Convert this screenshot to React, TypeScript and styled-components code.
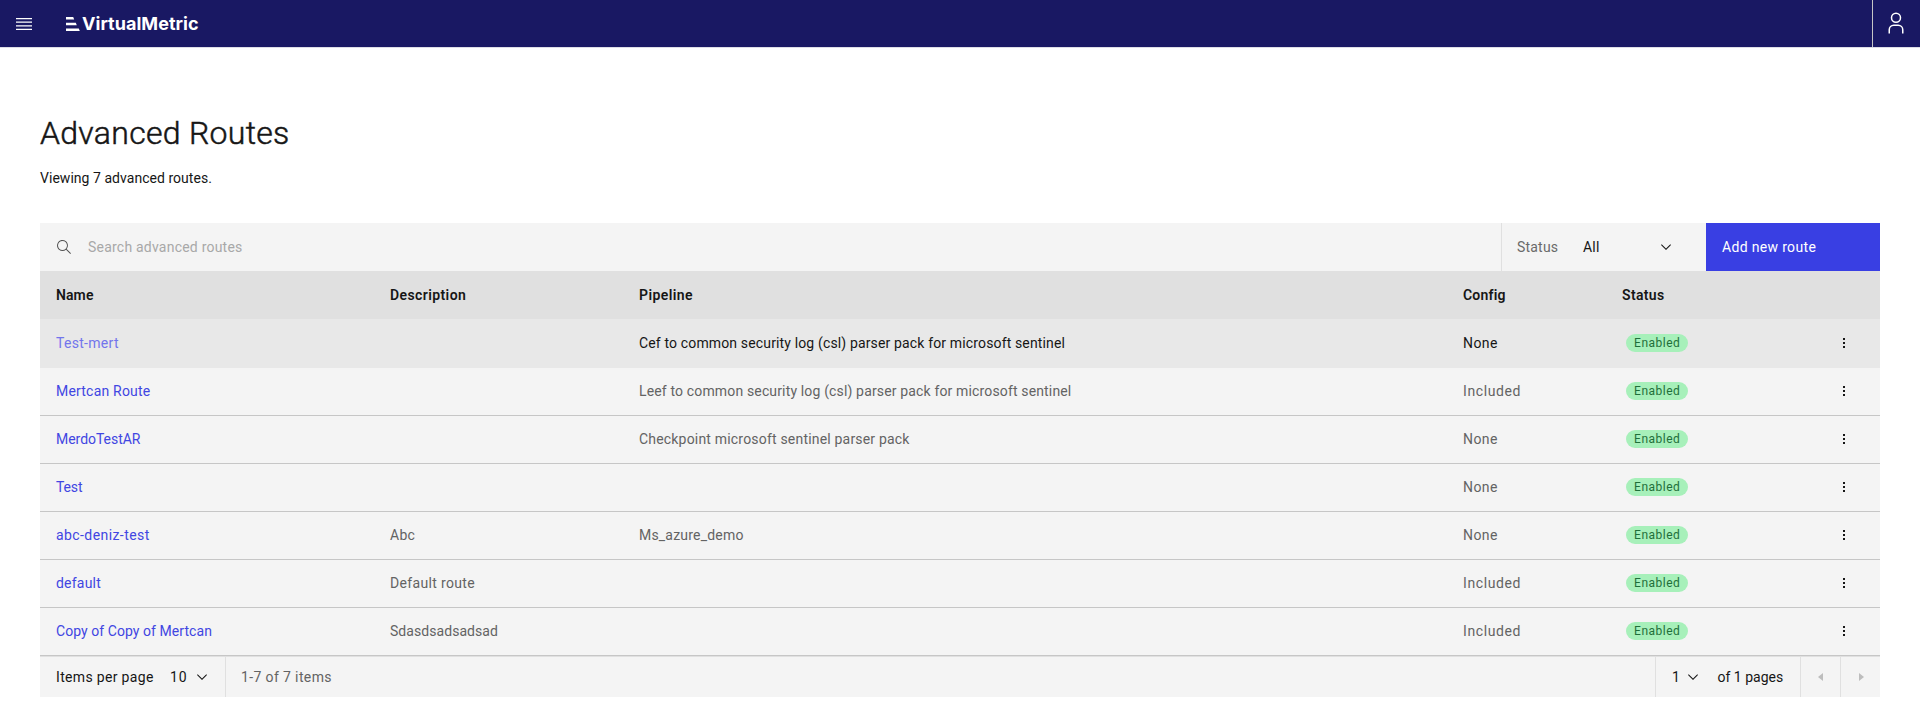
import React from 'react';
import styled, { createGlobalStyle } from 'styled-components';

const GlobalStyle = createGlobalStyle`
  *, *::before, *::after { box-sizing: border-box; }
  body {
    margin: 0;
    background: #fff;
    color: #161616;
    font-family: Roboto, "Open Sans", sans-serif;
    font-size: 14px;
    line-height: 18px;
    font-kerning: normal;
  }
  button { font: inherit; color: inherit; border: 0; padding: 0; background: none; cursor: pointer; }
`;

const Text = styled.span<{ $track?: number }>`
  letter-spacing: ${p => p.$track ?? 0}px;
  white-space: pre;
`;

/* ---------- header ---------- */

const Header = styled.header`
  display: flex;
  align-items: center;
  height: 48px;
  background: #191863;
  border-bottom: 1px solid #dcdce6;
`;

const MenuButton = styled.button`
  display: flex;
  align-items: center;
  justify-content: center;
  width: 48px;
  height: 47px;
  padding-top: 1px;
`;

const Brand = styled.a`
  display: flex;
  align-items: center;
  gap: 2px;
  margin-left: 18px;
  color: #fff;
`;

const BrandName = styled.span`
  font: 700 18px/24px Inter, sans-serif;
  letter-spacing: 0.03px;
`;

const UserButton = styled.button`
  display: flex;
  align-items: center;
  justify-content: center;
  width: 48px;
  height: 47px;
  margin-left: auto;
  padding: 0 1px 1px 0;
  border-left: 1px solid #c6c6c6;
`;

/* ---------- page ---------- */

const Page = styled.main`
  padding: 65px 40px 0;
`;

const Title = styled.h1`
  margin: 0;
  font-weight: 300;
  font-size: 32px;
  line-height: 40px;
  letter-spacing: 0.29px;
  -webkit-text-stroke: 0.5px #161616;
`;

const Summary = styled.p`
  margin: 16px 0 36px;
  letter-spacing: 0.037px;
`;

/* ---------- toolbar ---------- */

const Toolbar = styled.div`
  display: flex;
  height: 48px;
  background: #f4f4f4;
`;

const Search = styled.label`
  flex: 1;
  display: flex;
  align-items: center;
  gap: 16px;
  padding-left: 16px;
  color: #a8a8a8;
`;

const Filter = styled.div`
  display: flex;
  align-items: center;
  width: 205px;
  padding-left: 15px;
  border-left: 1px solid #e0e0e0;
`;

const FilterLabel = styled(Text)`
  width: 66px;
  color: #6a6a6a;
`;

const FilterValue = styled(Text)`
  width: 75px;
`;

const AddButton = styled.button`
  width: 174px;
  padding-left: 16px;
  background: #393fe3;
  color: #fff;
  text-align: left;
`;

/* ---------- table ---------- */

const rowGrid = '334px 249px 824px 159px 214px 60px';

const HeadRow = styled.div`
  display: grid;
  grid-template-columns: ${rowGrid};
  align-items: center;
  height: 48px;
  background: #e0e0e0;
  font-weight: 600;
`;

const Row = styled.div<{ $active?: boolean }>`
  display: grid;
  grid-template-columns: ${rowGrid};
  align-items: center;
  height: ${p => (p.$active ? 49 : 48)}px;
  padding-bottom: 1px;
  background: ${p => (p.$active ? '#e8e8e8' : '#f4f4f4')};
  border-bottom: ${p => (p.$active ? '0' : '1px solid #c6c6c6')};
  color: ${p => (p.$active ? '#161616' : '#636363')};
`;

const Cell = styled.div`
  display: flex;
  align-items: center;
  padding-left: 16px;
`;

const RouteLink = styled(Text)<{ $active?: boolean }>`
  color: ${p => (p.$active ? '#7275ec' : '#4146e2')};
`;

const Tag = styled.span`
  display: flex;
  align-items: center;
  justify-content: center;
  width: 62px;
  height: 18px;
  margin-left: 4px;
  border-radius: 9px;
  background: #a7f0ba;
  color: #1f6f3a;
  font-size: 12px;
  line-height: 16px;
  letter-spacing: 0.5px;
  text-indent: 0.5px;
`;

const ActionButton = styled.button`
  display: flex;
  width: 16px;
  height: 16px;
  margin-left: 16px;
  color: #161616;
`;

/* ---------- pagination ---------- */

const Pagination = styled.div`
  display: flex;
  height: 41px;
  background: #f4f4f4;
  border-top: 1px solid #e0e0e0;
`;

const PageSize = styled.div`
  display: flex;
  align-items: center;
  width: 186px;
  padding-left: 16px;
  border-right: 1px solid #e0e0e0;
`;

const PageSizeLabel = styled(Text)`
  width: 114px;
`;

const PageSizeValue = styled(Text)`
  width: 24px;
`;

const Range = styled.div`
  flex: 1;
  display: flex;
  align-items: center;
  padding-left: 15px;
  color: #636363;
`;

const PageSelect = styled.div`
  display: flex;
  align-items: center;
  width: 145px;
  padding-left: 16px;
  border-left: 1px solid #e0e0e0;
`;

const PageNumber = styled(Text)`
  width: 13px;
`;

const PageTotal = styled(Text)`
  margin-left: 16.5px;
`;

const PageButton = styled.button`
  display: flex;
  align-items: center;
  width: 40px;
  padding-left: 12px;
  border-left: 1px solid #e0e0e0;
  color: #bdbdbd;
`;

/* ---------- icons ---------- */

const MenuIcon = () => (
  <svg width="20" height="20" viewBox="0 0 20 20" fill="#fff">
    <path d="M2 14.8H18V16H2zM2 11.2H18V12.4H2zM2 7.6H18V8.8H2zM2 4H18V5.2H2z" />
  </svg>
);

const BrandMark = () => (
  <svg width="14" height="14" viewBox="0 0 14 14" fill="#fff">
    <path d="M0 0h7.2l1 2.5H0zM0 5.8h9.8l1 2.5H0zM0 11.4h12.8l1 2.5H0z" />
  </svg>
);

const UserIcon = () => (
  <svg width="24" height="24" viewBox="0 0 32 32" fill="#fff">
    <path d="M16 4a5 5 0 1 1-5 5 5 5 0 0 1 5-5m0-2a7 7 0 1 0 7 7A7 7 0 0 0 16 2zM26 30H24V25a5 5 0 0 0-5-5H13a5 5 0 0 0-5 5v5H6V25a7 7 0 0 1 7-7h6a7 7 0 0 1 7 7z" />
  </svg>
);

const SearchIcon = () => (
  <svg width="16" height="16" viewBox="0 0 16 16" fill="#525252">
    <path d="M15 14.3L10.7 10c1.9-2.3 1.6-5.8-.7-7.7S4.2.7 2.3 3 .7 8.8 3 10.7c2 1.7 5 1.7 7 0l4.3 4.3.7-.7zM2 6.5C2 4 4 2 6.5 2S11 4 11 6.5 9 11 6.5 11 2 9 2 6.5z" />
  </svg>
);

const ChevronIcon = () => (
  <svg width="16" height="16" viewBox="0 0 16 16" fill="#161616">
    <path d="M8 11L3 6 3.7 5.3 8 9.6 12.3 5.3 13 6z" />
  </svg>
);

const OverflowIcon = () => (
  <svg width="16" height="16" viewBox="0 0 16 16" fill="currentColor">
    <path d="M7 3h2v2H7zM7 7h2v2H7zM7 11h2v2H7z" />
  </svg>
);

const CaretIcon = ({ left }: { left?: boolean }) => (
  <svg width="16" height="16" viewBox="0 0 32 32" fill="currentColor">
    <path d={left ? 'M20 24L10 16 20 8z' : 'M12 8L22 16 12 24z'} />
  </svg>
);

/* ---------- data ---------- */

type Label = { text: string; track: number };

const label = (text: string, track: number): Label => ({ text, track });

const none = label('None', 0.43);
const included = label('Included', 0.6);

const headings: Label[] = [
  label('Name', 0.1),
  label('Description', 0.4),
  label('Pipeline', 0.41),
  label('Config', 0.2),
  label('Status', 0.34),
];

type RouteItem = { name: Label; description?: Label; pipeline?: Label; config: Label; active?: boolean };

const routes: RouteItem[] = [
  {
    name: label('Test-mert', 0.3),
    pipeline: label('Cef to common security log (csl) parser pack for microsoft sentinel', 0.145),
    config: none,
    active: true,
  },
  {
    name: label('Mertcan Route', 0.2),
    pipeline: label('Leef to common security log (csl) parser pack for microsoft sentinel', 0.15),
    config: included,
  },
  { name: label('MerdoTestAR', -0.04), pipeline: label('Checkpoint microsoft sentinel parser pack', 0.19), config: none },
  { name: label('Test', -0.15), config: none },
  { name: label('abc-deniz-test', 0.42), description: label('Abc', 0.25), pipeline: label('Ms_azure_demo', 0.2), config: none },
  { name: label('default', 0.22), description: label('Default route', 0.345), config: included },
  { name: label('Copy of Copy of Mertcan', 0.06), description: label('Sdasdsadsadsad', 0.057), config: included },
];

const LabelText = ({ value }: { value?: Label }) => (value ? <Text $track={value.track}>{value.text}</Text> : null);

export default function App() {
  return (
    <>
      <GlobalStyle />
      <Header>
        <MenuButton aria-label="Menu"><MenuIcon /></MenuButton>
        <Brand>
          <BrandMark />
          <BrandName>VirtualMetric</BrandName>
        </Brand>
        <UserButton aria-label="User"><UserIcon /></UserButton>
      </Header>
      <Page>
        <Title>Advanced Routes</Title>
        <Summary>Viewing 7 advanced routes.</Summary>

        <Toolbar>
          <Search>
            <SearchIcon />
            <Text $track={0.22}>Search advanced routes</Text>
          </Search>
          <Filter>
            <FilterLabel $track={0.2}>Status</FilterLabel>
            <FilterValue $track={0.2}>All</FilterValue>
            <ChevronIcon />
          </Filter>
          <AddButton><Text $track={0.33}>Add new route</Text></AddButton>
        </Toolbar>

        <HeadRow>
          {headings.map(h => (
            <Cell key={h.text}><LabelText value={h} /></Cell>
          ))}
        </HeadRow>
        {routes.map(r => (
          <Row key={r.name.text} $active={r.active}>
            <Cell><RouteLink $active={r.active} $track={r.name.track}>{r.name.text}</RouteLink></Cell>
            <Cell><LabelText value={r.description} /></Cell>
            <Cell><LabelText value={r.pipeline} /></Cell>
            <Cell><LabelText value={r.config} /></Cell>
            <Cell><Tag>Enabled</Tag></Cell>
            <ActionButton aria-label="Options"><OverflowIcon /></ActionButton>
          </Row>
        ))}

        <Pagination>
          <PageSize>
            <PageSizeLabel $track={0.33}>Items per page</PageSizeLabel>
            <PageSizeValue $track={1}>10</PageSizeValue>
            <ChevronIcon />
          </PageSize>
          <Range><Text $track={0.375}>1-7 of 7 items</Text></Range>
          <PageSelect>
            <PageNumber>1</PageNumber>
            <ChevronIcon />
            <PageTotal>of 1 pages</PageTotal>
          </PageSelect>
          <PageButton aria-label="Previous page"><CaretIcon left /></PageButton>
          <PageButton aria-label="Next page"><CaretIcon /></PageButton>
        </Pagination>
      </Page>
    </>
  );
}
